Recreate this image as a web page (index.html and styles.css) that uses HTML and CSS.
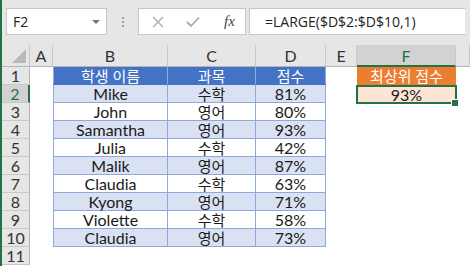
FILE: index.html
```html
<!DOCTYPE html>
<html lang="ko">
<head>
    <meta charset="UTF-8">
    <title>최상위 점수</title>
    <link rel="stylesheet" href="styles.css">
</head>
<body>
    <div class="app">
        <div class="toolbar">
            <div class="namebox">
                <span>F2</span>
                <span class="arrow"></span>
            </div>
            <div class="dots"><i></i><i></i><i></i></div>
            <div class="fxbox">
                <svg class="icon" width="12" height="12" viewBox="0 0 12 12">
                    <path d="M1 1 L11 11 M11 1 L1 11" stroke="#aaaaaa" stroke-width="1.3" fill="none"/>
                </svg>
                <svg class="icon" width="14" height="12" viewBox="0 0 14 12">
                    <path d="M1 6 L5 10 L13 1.5" stroke="#aaaaaa" stroke-width="1.8" fill="none"/>
                </svg>
                <span class="fx">fx</span>
            </div>
            <div class="formula">=LARGE($D$2:$D$10,1)</div>
        </div>

        <div class="sheet">
            <div class="row head">
                <div class="corner"><span class="tri"></span></div>
                <div class="ch">A</div>
                <div class="ch">B</div>
                <div class="ch">C</div>
                <div class="ch">D</div>
                <div class="ch">E</div>
                <div class="ch sel">F</div>
                <div class="ch"></div>
            </div>
            <div class="row">
                <div class="rh">1</div>
                <div></div>
                <div class="t th first ko">학생 이름</div>
                <div class="t th ko">과목</div>
                <div class="t th ko">점수</div>
                <div></div>
                <div class="orange ko">최상위 점수</div>
                <div></div>
            </div>
            <div class="row">
                <div class="rh sel">2</div>
                <div></div>
                <div class="t band first">Mike</div>
                <div class="t band ko">수학</div>
                <div class="t band">81%</div>
                <div></div>
                <div class="result active">93%</div>
                <div></div>
            </div>
            <div class="row">
                <div class="rh">3</div>
                <div></div>
                <div class="t first">John</div>
                <div class="t ko">영어</div>
                <div class="t">80%</div>
                <div></div><div></div><div></div>
            </div>
            <div class="row">
                <div class="rh">4</div>
                <div></div>
                <div class="t band first">Samantha</div>
                <div class="t band ko">영어</div>
                <div class="t band">93%</div>
                <div></div><div></div><div></div>
            </div>
            <div class="row">
                <div class="rh">5</div>
                <div></div>
                <div class="t first">Julia</div>
                <div class="t ko">수학</div>
                <div class="t">42%</div>
                <div></div><div></div><div></div>
            </div>
            <div class="row">
                <div class="rh">6</div>
                <div></div>
                <div class="t band first">Malik</div>
                <div class="t band ko">영어</div>
                <div class="t band">87%</div>
                <div></div><div></div><div></div>
            </div>
            <div class="row">
                <div class="rh">7</div>
                <div></div>
                <div class="t first">Claudia</div>
                <div class="t ko">수학</div>
                <div class="t">63%</div>
                <div></div><div></div><div></div>
            </div>
            <div class="row">
                <div class="rh">8</div>
                <div></div>
                <div class="t band first">Kyong</div>
                <div class="t band ko">영어</div>
                <div class="t band">71%</div>
                <div></div><div></div><div></div>
            </div>
            <div class="row">
                <div class="rh">9</div>
                <div></div>
                <div class="t first">Violette</div>
                <div class="t ko">수학</div>
                <div class="t">58%</div>
                <div></div><div></div><div></div>
            </div>
            <div class="row">
                <div class="rh">10</div>
                <div></div>
                <div class="t band first">Claudia</div>
                <div class="t band ko">영어</div>
                <div class="t band">73%</div>
                <div></div><div></div><div></div>
            </div>
            <div class="row">
                <div class="rh">11</div>
                <div></div><div></div><div></div><div></div><div></div><div></div><div></div>
            </div>
        </div>
    </div>
</body>
</html>
```

FILE: styles.css
```css
:root {
    --excel-green: #217346;
    --bar-color: #e6e6e6;
    --head-color: #e6e6e6;
    --head-sel: #d2d2d2;
    --head-line: #c8c8c8;
    --table-blue: #4472c4;
    --band-blue: #d9e1f2;
    --table-line: #8ea9db;
    --orange: #ed7d31;
    --orange-light: #fce4d6;
}
* {
    box-sizing: border-box;
}
body {
    margin: 0;
    background: #ffffff;
    font-family: Lato, "Noto Sans CJK KR", sans-serif;
    font-size: 16px;
    color: #1a1a1a;
}
.app {
    width: 470px;
    height: 266px;
    overflow: hidden;
    border-left: 2px solid var(--excel-green);
    background: #ffffff;
}

/* formula bar */
.toolbar {
    height: 45px;
    background: var(--bar-color);
    display: flex;
    align-items: flex-start;
    padding: 8px 0 0 4px;
}
.namebox {
    width: 101px;
    height: 27px;
    background: #ffffff;
    border: 1px solid #c6c6c6;
    display: flex;
    align-items: center;
    justify-content: space-between;
    padding: 0 6px 0 6px;
    font-family: "Open Sans", sans-serif;
    font-size: 14px;
    color: #222;
}
.arrow {
    width: 0;
    height: 0;
    border-left: 4px solid transparent;
    border-right: 4px solid transparent;
    border-top: 4px solid #777;
}
.dots {
    width: 31px;
    height: 27px;
    display: flex;
    flex-direction: column;
    align-items: center;
    justify-content: center;
    gap: 2px;
}
.dots i {
    width: 2px;
    height: 2px;
    background: #a0a0a0;
}
.fxbox {
    width: 108px;
    height: 27px;
    background: #ffffff;
    border: 1px solid #c6c6c6;
    display: flex;
    align-items: center;
    padding-left: 13px;
    gap: 22px;
}
.fx {
    font-family: "Liberation Serif", serif;
    font-style: italic;
    font-size: 15px;
    color: #444;
    margin-left: 2px;
}
.formula {
    margin-left: 3px;
    width: 216px;
    height: 27px;
    background: #ffffff;
    border: 1px solid #c6c6c6;
    border-right: none;
    display: flex;
    align-items: center;
    padding-left: 15px;
    font-family: "Open Sans", sans-serif;
    font-size: 14px;
    color: #222;
}

/* grid */
.row {
    display: grid;
    grid-template-columns: 28px 23px 115px 88px 70px 31px 99px 1fr;
    height: 18px;
}
.row > div {
    display: flex;
    align-items: center;
    justify-content: center;
    line-height: 1;
    padding-top: 1px;
}
.row > .ko {
    font-size: 15px;
}
.row.head {
    height: 22px;
}
.corner,
.ch {
    background: var(--head-color);
    border-right: 1px solid var(--head-line);
    border-bottom: 1px solid #b4b4b4;
    color: #333;
}
.corner {
    position: relative;
}
.tri {
    position: absolute;
    right: 3px;
    bottom: 3px;
    width: 0;
    height: 0;
    border-left: 14px solid transparent;
    border-bottom: 14px solid #b9b9b9;
}
.ch.sel {
    background: var(--head-sel);
    color: var(--excel-green);
    border-bottom: 2px solid var(--excel-green);
}
.rh {
    background: var(--head-color);
    border-right: 1px solid #b4b4b4;
    border-bottom: 1px solid var(--head-line);
    color: #333;
}
.rh.sel {
    background: var(--head-sel);
    color: var(--excel-green);
    border-right: 2px solid var(--excel-green);
}

/* table B1:D10 */
.t {
    border-right: 1px solid var(--table-line);
    border-bottom: 1px solid var(--table-line);
}
.t.first {
    border-left: 1px solid var(--table-line);
}
.t.th {
    background: var(--table-blue);
    color: #ffffff;
    border-right-color: #8faadc;
    border-bottom-color: var(--table-blue);
}
.band {
    background: var(--band-blue);
}

/* F column */
.orange {
    background: var(--orange);
    color: #ffffff;
}
.result {
    background: var(--orange-light);
}
.active {
    position: relative;
}
.active::after {
    content: '';
    position: absolute;
    top: 0;
    left: -1px;
    right: -1px;
    bottom: -1px;
    border: 2px solid var(--excel-green);
}
.active::before {
    content: '';
    position: absolute;
    right: -2px;
    bottom: -3px;
    width: 6px;
    height: 6px;
    background: var(--excel-green);
    border-left: 1px solid #ffffff;
    border-top: 1px solid #ffffff;
    z-index: 1;
}
```
